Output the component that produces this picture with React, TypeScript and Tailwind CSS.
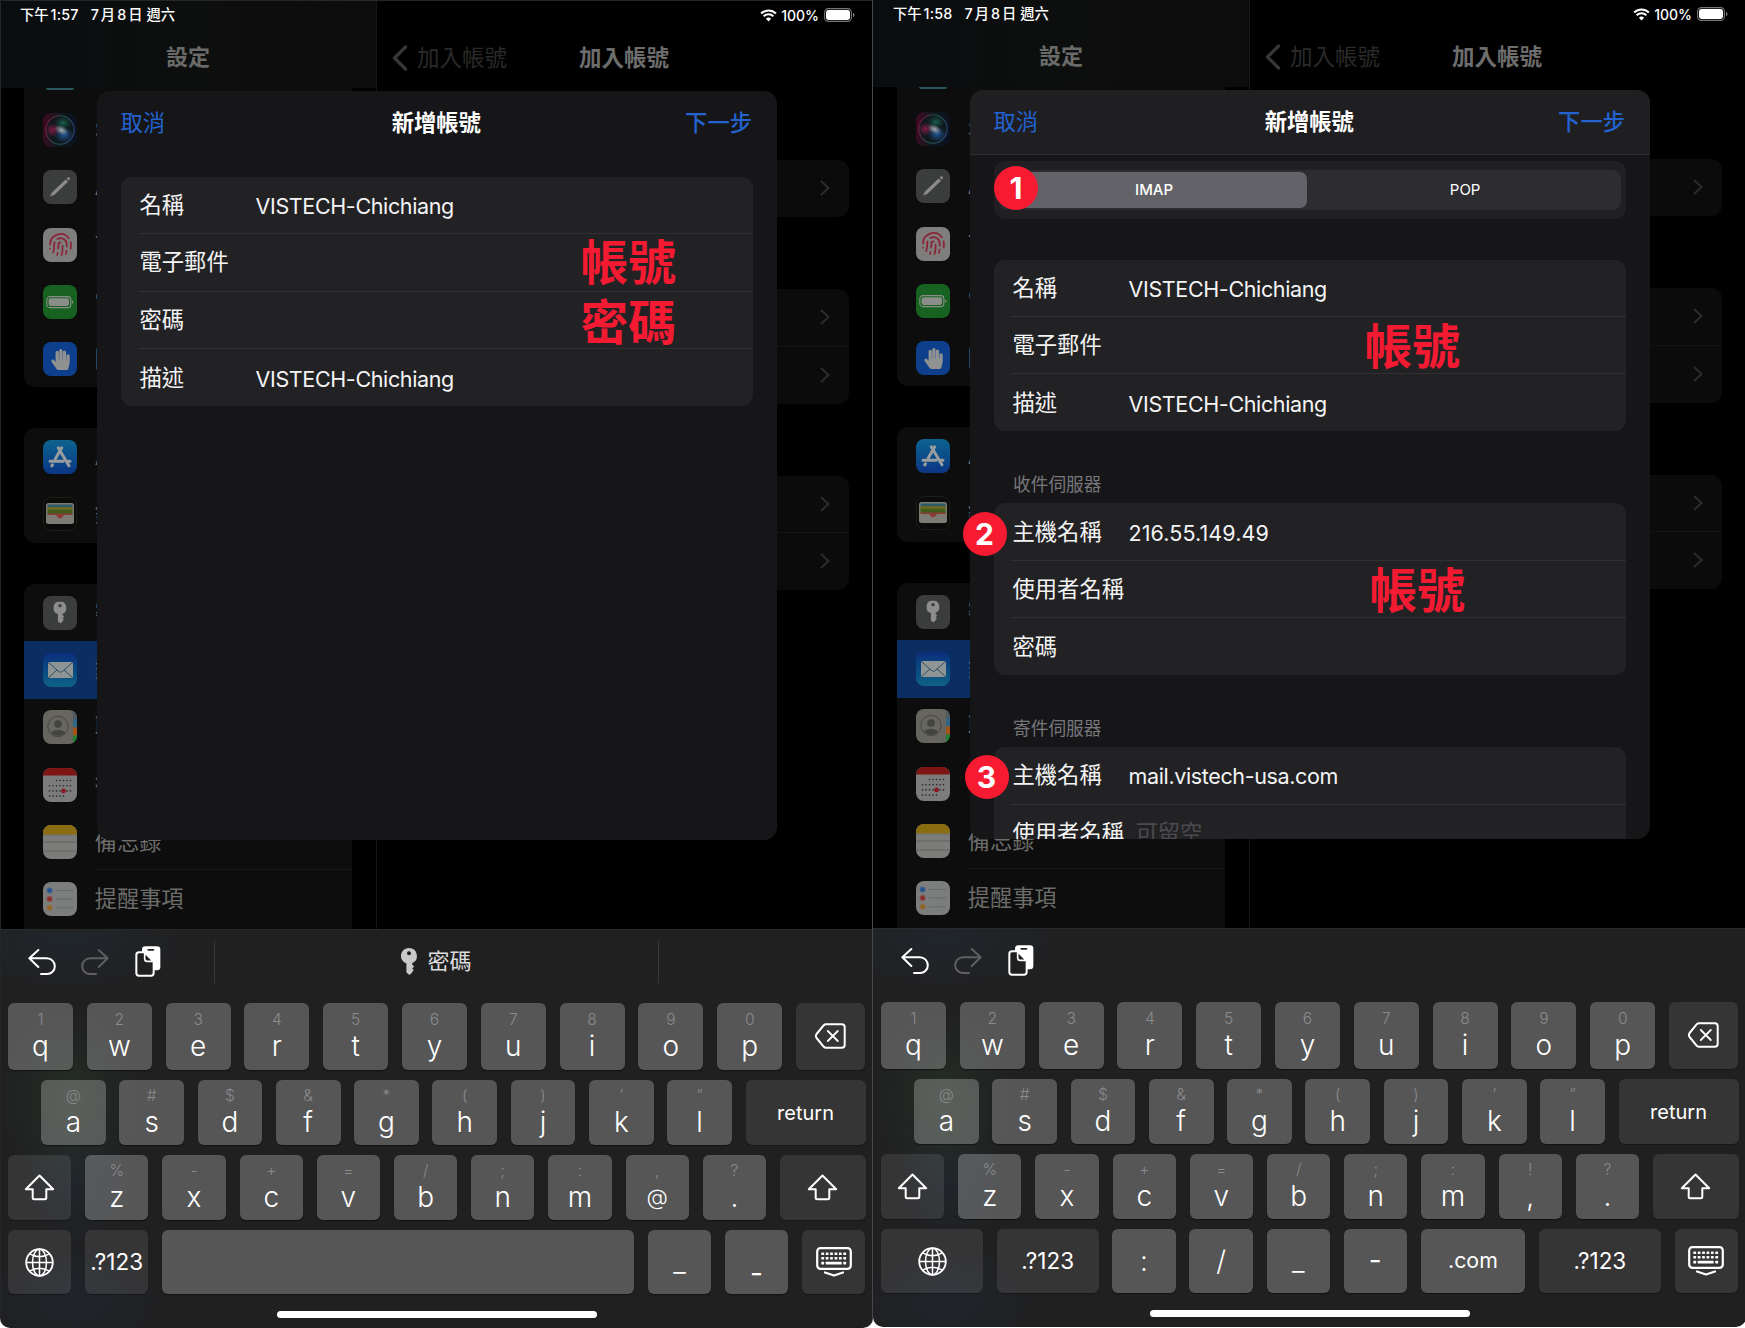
import React from "react";
import { Fingerprint } from "lucide-react";
import { FaHandPaper } from "react-icons/fa";

type Mode = "simple" | "server";

/* ---------- status bar ---------- */

function Wifi() {
  return (
    <svg width="17" height="13" viewBox="0 0 17 13" fill="none" stroke="#fff">
      <path d="M1.1 4.6a10.5 10.5 0 0 1 14.8 0" strokeWidth="2.1" />
      <path d="M3.6 7.3a7 7 0 0 1 9.8 0" strokeWidth="2" />
      <path d="M8.5 12.4 5.9 9.8a3.7 3.7 0 0 1 5.2 0z" fill="#fff" stroke="none" />
    </svg>
  );
}

function Battery() {
  return (
    <svg width="31" height="14" viewBox="0 0 31 14" fill="none">
      <rect x="0.6" y="0.6" width="26.8" height="12.8" rx="3.8" stroke="#77777a" strokeWidth="1.1" />
      <rect x="2" y="2" width="24" height="10" rx="2.4" fill="#fff" />
      <path d="M29 4.8q1.6 .8 1.6 2.2t-1.6 2.2z" fill="#77777a" />
    </svg>
  );
}

/* ---------- sidebar icons ---------- */

function SiriIcon({ id }: { id: string }) {
  return (
    <svg width="34" height="34" viewBox="0 0 34 34">
      <defs>
        <linearGradient id={id + "bg"} x1="0" y1="0.4" x2="1" y2="0.5">
          <stop offset="0" stopColor="#3b0a20" />
          <stop offset="0.45" stopColor="#12191c" />
          <stop offset="1" stopColor="#0a1020" />
        </linearGradient>
        <linearGradient id={id + "ring"} x1="0" y1="0.3" x2="1" y2="0.6">
          <stop offset="0" stopColor="#7a1740" />
          <stop offset="0.5" stopColor="#1f5648" />
          <stop offset="1" stopColor="#2a4476" />
        </linearGradient>
        <radialGradient id={id + "glow"}>
          <stop offset="0" stopColor="#a3adb2" />
          <stop offset="1" stopColor="#a3adb2" stopOpacity="0" />
        </radialGradient>
        <radialGradient id={id + "pink"}>
          <stop offset="0" stopColor="#7d1c45" />
          <stop offset="1" stopColor="#7d1c45" stopOpacity="0" />
        </radialGradient>
        <radialGradient id={id + "blue"}>
          <stop offset="0" stopColor="#1f5596" />
          <stop offset="1" stopColor="#1b4a86" stopOpacity="0" />
        </radialGradient>
        <radialGradient id={id + "green"}>
          <stop offset="0" stopColor="#17604a" />
          <stop offset="1" stopColor="#12493a" stopOpacity="0" />
        </radialGradient>
      </defs>
      <rect width="34" height="34" rx="8" fill={"url(#" + id + "bg)"} />
      <circle cx="17" cy="17" r="14.2" fill="#10181c" stroke={"url(#" + id + "ring)"} strokeWidth="1.1" />
      <ellipse cx="20" cy="10" rx="9" ry="7" fill={"url(#" + id + "green)"} />
      <ellipse cx="9.500" cy="17" rx="7.500" ry="7" fill={"url(#" + id + "pink)"} />
      <ellipse cx="21" cy="22" rx="10" ry="8" fill={"url(#" + id + "blue)"} />
      <ellipse cx="18.500" cy="17" rx="7.500" ry="4.500" fill={"url(#" + id + "glow)"} transform="rotate(25 18 17)" />
    </svg>
  );
}

function KeyGlyph({ fill, hole }: { fill: string; hole: string }) {
  return (
    <svg width="16" height="27" viewBox="0 0 16 27">
      <path
        d="M8 0a7.9 7.9 0 0 1 3.2 15.1v1.4l2 1.9-2 2 1.6 1.7-1.6 1.8v.6L8.4 27 5.4 24.6V15.4A7.9 7.9 0 0 1 8 0z"
        fill={fill}
      />
      <circle cx="8" cy="5.2" r="2" fill={hole} />
    </svg>
  );
}

function Tile({ className, children }: { className: string; children?: React.ReactNode }) {
  return (
    <div className={"flex h-[34px] w-[34px] shrink-0 items-center justify-center overflow-hidden rounded-[8px] " + className}>
      {children}
    </div>
  );
}

function PencilIcon() {
  return (
    <Tile className="bg-[#3b3d3c]">
      <svg width="34" height="34" viewBox="0 0 34 34">
        <path d="M7 26.6 9 22.4 22.6 9.4l2.4 2.4L11.2 25z" fill="#8b8c8a" />
        <path d="m23.6 8.4 1.5-1.1q1.6-.4 1.9 1.2L25.9 10.800z" fill="#8b8c8a" />
      </svg>
    </Tile>
  );
}

function BatteryTile() {
  return (
    <Tile className="bg-[#176221]">
      <svg width="28" height="14" viewBox="0 0 28 14">
        <rect x="0.8" y="1.6" width="24" height="11" rx="3.2" fill="none" stroke="#8b8d88" strokeWidth="1.1" />
        <rect x="2.6" y="3.3" width="20.4" height="7.6" rx="1.8" fill="#8b8d88" />
        <path d="M26 5.4q1.4.6 1.400 1.700t-1.400 1.700z" fill="#8b8d88" />
      </svg>
    </Tile>
  );
}

function AppStoreIcon() {
  return (
    <Tile className="bg-gradient-to-b from-[#0e638f] to-[#0d3585]">
      <svg width="34" height="34" viewBox="0 0 34 34" fill="none" stroke="#9a9d9e" strokeWidth="3" strokeLinecap="round">
        <path d="M18.700 7.800 12.300 19M15.200 7.800 26 25.800M7 21.300h13M25 21.300h2M9.500 24.800l-.7 1.100" />
      </svg>
    </Tile>
  );
}

function WalletIcon() {
  return (
    <Tile className="border border-[#1c1c1a] bg-[#0b0b0a]">
      <svg width="28" height="21" viewBox="0 0 28 21">
        <rect width="28" height="21" rx="2.500" fill="#7c7b74" />
        <rect x="1.500" y="1.500" width="25" height="4" fill="#2f5a68" />
        <rect x="1.500" y="4.200" width="25" height="3.500" fill="#6f6a1f" />
        <rect x="1.500" y="6.800" width="25" height="4.500" fill="#3f5c1c" />
        <path d="M1.500 10.500h25v1.500h-7.500q-1.500 0-2 1.200a3.300 3.300 0 0 1-6 0q-.5-1.200-2-1.200H1.500z" fill="#8b3a33" />
      </svg>
    </Tile>
  );
}

function MailIcon() {
  return (
    <Tile className="bg-gradient-to-b from-[#0c2f7c] to-[#0f6186]">
      <svg width="25" height="16" viewBox="0 0 25 16">
        <rect width="25" height="16" rx="1.800" fill="#8f9494" />
        <path d="M.8.800 10.800 9.600q1.700 1.300 3.400 0L24.200.800M.8 15.300 9 8M24.200 15.300 16 8" fill="none" stroke="#23475f" strokeWidth="0.900" />
      </svg>
    </Tile>
  );
}

function ContactsIcon() {
  return (
    <Tile className="bg-[#66655e]">
      <svg width="34" height="34" viewBox="0 0 34 34">
        <rect x="30" y="0" width="4" height="9" fill="#4e5a61" />
        <rect x="30" y="9" width="4" height="8.500" fill="#2f6683" />
        <rect x="30" y="17.500" width="4" height="8" fill="#a3521a" />
        <rect x="30" y="25.500" width="4" height="9" fill="#1e8030" />
        <circle cx="15" cy="16.500" r="10.200" fill="none" stroke="#43433f" strokeWidth="0.900" />
        <circle cx="15" cy="14" r="3.800" fill="#43433f" />
        <path d="M7.500 22.500q7.500-5.500 15 0-7 7-15 0z" fill="#43433f" />
      </svg>
    </Tile>
  );
}

function CalendarIcon() {
  const rows = [
    [13, 16.500, 20, 23.500, 27],
    [6, 9.500, 13, 16.500, 20, 23.500, 27],
    [6, 9.500, 13, 16.500, 20, 23.500, 27],
    [6, 9.500, 13, 16.500, 20],
  ];
  return (
    <Tile className="bg-[#7b7c7b]">
      <svg width="34" height="34" viewBox="0 0 34 34">
        <rect width="34" height="7.500" fill="#7e1512" />
        {rows.map((r, y) => r.map((x) => <circle key={y + "-" + x} cx={x + 0.500} cy={12.500 + y * 5.200} r="0.800" fill="#252525" />))}
        <circle cx="20.500" cy="22.900" r="2.300" fill="#8c1420" />
      </svg>
    </Tile>
  );
}

function NotesIcon() {
  return (
    <Tile className="bg-[#7c7d7b]">
      <svg width="34" height="34" viewBox="0 0 34 34">
        <rect width="34" height="9.500" fill="#8a6d10" />
        <path d="M0 10.300h34" stroke="#555" strokeWidth="0.800" strokeDasharray="0.800 1.200" />
        <path d="M0 17h34M0 26h34" stroke="#5a5b5a" strokeWidth="0.800" />
      </svg>
    </Tile>
  );
}

function RemindersIcon() {
  const dots: [number, string][] = [
    [8.500, "#1d4f94"],
    [17, "#8f2722"],
    [25.800, "#96631c"],
  ];
  return (
    <Tile className="bg-[#7c7d7d]">
      <svg width="34" height="34" viewBox="0 0 34 34">
        {dots.map(([y, c]) => (
          <g key={y}>
            <circle cx="6.600" cy={y} r="3" fill={c} fillOpacity="0.600" />
            <circle cx="6.600" cy={y} r="1.700" fill={c} />
            <path d={"M13 " + y + "h17"} stroke="#626362" strokeWidth="0.800" />
          </g>
        ))}
      </svg>
    </Tile>
  );
}

/* ---------- backdrop: settings sidebar and detail ---------- */

function SideRow({ icon, label, active }: { icon: React.ReactNode; label: string; active?: boolean }) {
  return (
    <div className={"flex h-[57.300px] items-center pl-[19px] " + (active ? "bg-[#0b2d62]" : "")}>
      {icon}
      <span className="ml-[17.800px] whitespace-nowrap text-[22.200px] leading-[30px] text-[#6c6c6b]">{label}</span>
    </div>
  );
}

function Sidebar({ id }: { id: string }) {
  return (
    <aside className="flex w-[377px] shrink-0 flex-col border-r border-[#151615]">
      <div className="h-[88px] shrink-0 bg-gradient-to-r from-[#0a0d0f] via-[#0d0f0e] to-[#0b0c0b] pt-[41px] text-center text-[22px] leading-8 font-bold text-[#6a6b69]">
        設定
      </div>
      <div className="ml-6 flex w-[328px] flex-col">
        <div className="h-[299px] rounded-b-[11px] bg-[#0c0d0c]">
          <div className="ml-[22px] h-[13.300px]">
            <div className="h-[2px] w-[28px] rounded-b-full bg-[#2a5561]" />
          </div>
          <SideRow icon={<SiriIcon id={id} />} label="Siri與搜尋" />
          <SideRow icon={<PencilIcon />} label="Apple Pencil" />
          <SideRow
            icon={
              <Tile className="bg-[#7e7e7d]">
                <Fingerprint size={25} strokeWidth={1.700} color="#8c2437" />
              </Tile>
            }
            label="Touch ID與密碼"
          />
          <SideRow icon={<BatteryTile />} label="電池" />
          <SideRow
            icon={
              <Tile className="bg-[#0d3f8c]">
                <FaHandPaper size={21} color="#8f9290" />
              </Tile>
            }
            label="隱私權"
          />
        </div>
        <div className="mt-[41px] h-[115px] rounded-[11px] bg-[#0c0d0c]">
          <SideRow icon={<AppStoreIcon />} label="App Store" />
          <SideRow icon={<WalletIcon />} label="錢包" />
        </div>
        <div className="mt-[41px] h-[345px] overflow-hidden rounded-t-[11px] bg-[#0c0d0c]">
          <SideRow
            icon={
              <Tile className="bg-[#3b3d3d]">
                <span className="scale-[0.820]">
                  <KeyGlyph fill="#8c8d8c" hole="#3b3d3d" />
                </span>
              </Tile>
            }
            label="密碼"
          />
          <SideRow icon={<MailIcon />} label="郵件" active />
          <SideRow icon={<ContactsIcon />} label="聯絡人" />
          <SideRow icon={<CalendarIcon />} label="行事曆" />
          <SideRow icon={<NotesIcon />} label="備忘錄" />
          <div className="-mt-px ml-[71px] h-0 border-t border-[#171817]" />
          <SideRow icon={<RemindersIcon />} label="提醒事項" />
        </div>
      </div>
    </aside>
  );
}

function DetailRow() {
  return (
    <div className="flex h-[57.300px] items-center justify-end pr-[19px]">
      <svg className="-mt-px" width="10" height="16" viewBox="0 0 10 16" fill="none" stroke="#2b2c2b" strokeWidth="2">
        <path d="m1 1 7.500 7L1 15" />
      </svg>
    </div>
  );
}

function Detail() {
  return (
    <div className="flex flex-1 flex-col bg-black pr-[24px]">
      <div className="flex h-[88px] items-center pl-[15px]">
        <svg className="mt-[28px]" width="16" height="26" viewBox="0 0 16 26" fill="none" stroke="#363736" strokeWidth="3.200" strokeLinecap="round" strokeLinejoin="round">
          <path d="M13.500 2 2.500 13l11 11" />
        </svg>
        <span className="mt-[27px] ml-[9px] text-[22.500px] leading-8 text-[#292a29]">加入帳號</span>
        <span className="mt-[27px] ml-[72px] text-[22.500px] leading-8 font-bold text-[#6c6d6c]">加入帳號</span>
      </div>
      <div className="mt-[72px] ml-5 rounded-[11px] bg-[#0a0b0a]">
        <DetailRow />
      </div>
      <div className="mt-[72px] ml-5 divide-y divide-[#131413] rounded-[11px] bg-[#0a0b0a]">
        <DetailRow />
        <DetailRow />
      </div>
      <div className="mt-[72px] ml-5 divide-y divide-[#131413] rounded-[11px] bg-[#0a0b0a]">
        <DetailRow />
        <DetailRow />
      </div>
    </div>
  );
}

/* ---------- account form ---------- */

type FieldProps = {
  label: string;
  value?: string;
  placeholder?: string;
  mark?: string;
  markPad?: string;
  tracking?: string;
  last?: boolean;
};

function Field({ label, value, placeholder, mark, markPad = "", tracking = "tracking-[-0.360px]", last }: FieldProps) {
  return (
    <div className="ml-[17.500px] h-[57.300px]">
      <div className={"flex h-full items-center border-[#303032] " + (last ? "" : "border-b")}>
        <span className={"pl-[1.500px] text-[22.300px] leading-8 whitespace-nowrap text-[#f4f4f5] " + (placeholder ? "" : "w-[117.500px] shrink-0")}>
          {label}
        </span>
        {value && <span className={"pt-[2px] text-[21.500px] leading-8 text-[#f4f4f5] " + tracking}>{value}</span>}
        {placeholder && <span className="ml-[11.500px] text-[22.300px] leading-8 text-[#4b4b4e]">{placeholder}</span>}
        {mark && <span className={"ml-auto text-[47.700px] leading-none font-bold text-[#f31a32] " + markPad}>{mark}</span>}
      </div>
    </div>
  );
}

function Group({ children }: { children: React.ReactNode }) {
  return <div className="rounded-[11px] bg-[#222224]">{children}</div>;
}

function SectionTitle({ children }: { children: React.ReactNode }) {
  return <div className="flex h-[72px] items-end pb-[4.500px] pl-[19.500px] text-[17.700px] leading-7 text-[#77777c]">{children}</div>;
}

function Badge({ n, className }: { n: number; className: string }) {
  return (
    <span className={"absolute flex h-11 w-11 items-center justify-center rounded-full bg-[#f71b32] text-[30px] font-bold text-white " + className}>
      {n}
    </span>
  );
}

function Modal({ mode }: { mode: Mode }) {
  const server = mode === "server";
  return (
    <div className="absolute top-[90.500px] left-[97px] flex h-[749.500px] w-[679.500px] flex-col overflow-hidden rounded-[13px] bg-[#161618]">
      <div
        className={
          "grid h-[65.500px] shrink-0 grid-cols-3 items-center px-[23.500px] text-[22.300px] leading-8 " +
          (server ? "border-b border-[#2f2f32] bg-[#1f1f21]" : "")
        }
      >
        <span className="text-[#2362cf]">取消</span>
        <span className="-ml-px text-center font-bold text-white">新增帳號</span>
        <span className="pr-px text-right font-medium text-[#2362cf]">下一步</span>
      </div>
      {server ? (
        <div className="flex flex-col px-[23.500px] pt-[6px]">
          <div className="h-[57.500px] rounded-[11px] bg-[#202022] px-[5.500px] py-[8.500px]">
            <div className="grid h-full grid-cols-2 rounded-[9px] bg-[#2d2c31] text-[15px] text-white">
              <div className="my-[2.500px] mr-[3px] ml-[2.500px] flex items-center justify-center rounded-[7px] bg-[#636268] pt-px font-medium">IMAP</div>
              <div className="flex items-center justify-center pt-px">POP</div>
            </div>
          </div>
          <div className="mt-[41px]">
            <Group>
              <Field label="名稱" value="VISTECH-Chichiang" />
              <Field label="電子郵件" mark="帳號" markPad="pr-[166px] pt-[6px]" />
              <Field label="描述" value="VISTECH-Chichiang" last />
            </Group>
          </div>
          <SectionTitle>收件伺服器</SectionTitle>
          <Group>
            <Field label="主機名稱" value="216.55.149.49" tracking="tracking-[0.100px]" />
            <Field label="使用者名稱" mark="帳號" markPad="pr-[161px] pt-[7px]" />
            <Field label="密碼" last />
          </Group>
          <SectionTitle>寄件伺服器</SectionTitle>
          <Group>
            <Field label="主機名稱" value="mail.vistech-usa.com" />
            <Field label="使用者名稱" placeholder="可留空" />
          </Group>
        </div>
      ) : (
        <div className="px-[23.500px] pt-[21px]">
          <Group>
            <Field label="名稱" value="VISTECH-Chichiang" />
            <Field label="電子郵件" mark="帳號" markPad="pr-[77px] pt-[3px]" />
            <Field label="密碼" mark="密碼" markPad="pr-[77px] pt-[8px]" />
            <Field label="描述" value="VISTECH-Chichiang" last />
          </Group>
        </div>
      )}
    </div>
  );
}

/* ---------- keyboard ---------- */

function Undo({ className }: { className: string }) {
  return (
    <svg className={className} width="28" height="28" viewBox="0 0 84 84" fill="none" stroke="currentColor" strokeWidth="6" strokeLinecap="round" strokeLinejoin="round">
      <path d="M31 6 4 31l27 26M4 31h53a23.500 23.500 0 0 1 0 47H39" />
    </svg>
  );
}

function Clipboard() {
  return (
    <svg width="26" height="31" viewBox="0 0 78 93">
      <rect x="21" y="1" width="55" height="72" rx="10" fill="#fff" />
      <rect x="37" y="9" width="21" height="5" rx="2.500" fill="#222" />
      <path d="M4 27q0-8 8-8h19l25 25v37q0 8-8 8H12q-8 0-8-8z" fill="#202021" stroke="#fff" strokeWidth="6" />
      <path d="M29 20v18q0 8 8 8h18z" fill="#202021" stroke="#fff" strokeWidth="5" strokeLinejoin="round" />
    </svg>
  );
}

function Shift() {
  return (
    <svg width="31" height="27" viewBox="0 0 31 27" fill="none" stroke="#fff" strokeWidth="2" strokeLinejoin="round">
      <path d="M15.500 1.500 1.800 15.300h6.900v8.500q0 1.500 1.500 1.500h10.600q1.500 0 1.500-1.500v-8.500h6.900z" />
    </svg>
  );
}

function Globe() {
  return (
    <svg width="29" height="29" viewBox="0 0 29 29" fill="none" stroke="#fff" strokeWidth="1.500">
      <circle cx="14.500" cy="14.500" r="13.300" strokeWidth="1.800" />
      <ellipse cx="14.500" cy="14.500" rx="7" ry="13.300" />
      <path d="M14.500 1.200v26.600M1.200 14.500h26.600M4.600 5.900q9.900 5.600 19.800 0M4.600 23.100q9.900-5.600 19.800 0" />
    </svg>
  );
}

function Backspace() {
  return (
    <svg width="31" height="26" viewBox="0 0 31 26" fill="none" stroke="#fff" strokeWidth="2" strokeLinejoin="round" strokeLinecap="round">
      <path d="M11 1.300h15.800q2.900 0 2.900 2.900v17.600q0 2.900-2.900 2.900H11q-1.300 0-2.200-.9L1.600 15q-1.500-2 0-4L8.800 2.200q.9-.9 2.200-.9z" />
      <path d="m12.800 8 10 10M22.800 8l-10 10" strokeWidth="1.800" />
    </svg>
  );
}

function HideKeyboard() {
  const cols = [5.300, 9.700, 14.100, 18.500, 22.900, 27.300];
  return (
    <svg width="36" height="30" viewBox="0 0 36 30" fill="none" stroke="#fff">
      <rect x="1.200" y="1.200" width="33.600" height="20.600" rx="3.200" strokeWidth="2.200" />
      <g fill="#fff" stroke="none">
        {cols.map((x) => (
          <React.Fragment key={x}>
            <rect x={x} y="5.500" width="2.800" height="2.600" rx="0.500" />
            <rect x={x} y="10" width="2.800" height="2.600" rx="0.500" />
          </React.Fragment>
        ))}
        <rect x="5.300" y="14.800" width="2.800" height="2.600" rx="0.500" />
        <rect x="9.700" y="14.800" width="16" height="2.600" rx="0.500" />
        <rect x="27.300" y="14.800" width="2.800" height="2.600" rx="0.500" />
      </g>
      <path d="m9 25.500 9 3 9-3" strokeWidth="2.200" strokeLinecap="round" strokeLinejoin="round" />
    </svg>
  );
}

const lightKey = "shrink-0 rounded-[6px] bg-white/[0.245] shadow-[0_1px_1px_rgba(0,0,0,0.45)] ";
const darkKey = "flex shrink-0 items-center justify-center rounded-[6px] bg-white/[0.095] text-white shadow-[0_1px_1px_rgba(0,0,0,0.3)] ";

function Key({ top, main, className }: { top: string; main: string; className: string }) {
  return (
    <div className={lightKey + "flex flex-col items-center " + className}>
      <span className="h-5 text-[15.500px] leading-5 font-light text-[#8b8b8d]">{top}</span>
      <span className={"h-8 leading-8 font-light text-white " + (main === "@" ? "text-[22px]" : "text-[28px]")}>{main}</span>
    </div>
  );
}

function Keyboard({ mode }: { mode: Mode }) {
  const server = mode === "server";
  const row1: [string, string][] = [["1", "q"], ["2", "w"], ["3", "e"], ["4", "r"], ["5", "t"], ["6", "y"], ["7", "u"], ["8", "i"], ["9", "o"], ["0", "p"]];
  const row2: [string, string][] = [["@", "a"], ["#", "s"], ["$", "d"], ["&", "f"], ["*", "g"], ["(", "h"], [")", "j"], ["’", "k"], ["”", "l"]];
  const row3: [string, string][] = [["%", "z"], ["-", "x"], ["+", "c"], ["=", "v"], ["/", "b"], [";", "n"], [":", "m"], server ? ["!", ","] : [",", "@"], ["?", "."]];
  return (
    <div className="flex h-[399px] flex-col rounded-b-[10px] border-t border-[#29292a] bg-[#202021] bg-[radial-gradient(ellipse_70px_90px_at_70px_170px,rgba(50,80,50,0.28),transparent),radial-gradient(ellipse_90px_60px_at_75px_370px,rgba(30,60,90,0.16),transparent),radial-gradient(ellipse_60px_70px_at_75px_250px,rgba(35,65,90,0.16),transparent),radial-gradient(ellipse_120px_50px_at_70px_10px,rgba(35,60,80,0.22),transparent)]">
      <div className="flex h-[72.500px] shrink-0 items-start">
        <Undo className="mt-[17.500px] ml-[28px] text-white" />
        <Undo className="mt-[17.500px] ml-[25px] -scale-x-100 text-[#5f5f61]" />
        <div className="mt-[16px] ml-[25.500px]">
          <Clipboard />
        </div>
        {!server && (
          <div className="mt-[10.500px] ml-[53.500px] flex h-[42px] w-[445px] items-center justify-center border-x border-[#38383a] text-[22px] text-[#dcdcde]">
            <span className="mr-[10px]">
              <KeyGlyph fill="#c9c9cb" hole="#202021" />
            </span>
            密碼
          </div>
        )}
      </div>
      <div className="flex flex-col gap-[10.300px] pl-[8px]">
        <div className="flex h-[67.500px] gap-[13.800px]">
          {row1.map(([t, m]) => (
            <Key key={m} top={t} main={m} className="w-[65px] pt-[7.500px]" />
          ))}
          <div className={darkKey + "w-[69.500px]"}>
            <Backspace />
          </div>
        </div>
        <div className="flex h-[64.500px] gap-[13.600px] pl-[33px]">
          {row2.map(([t, m]) => (
            <Key key={m} top={t} main={m} className="w-[64.700px] pt-[5.500px]" />
          ))}
          <div className={darkKey + "w-[120px] text-[20px]"}>return</div>
        </div>
        <div className="flex h-[64.500px] gap-[13.900px]">
          <div className={darkKey + "w-[63.300px]"}>
            <Shift />
          </div>
          {row3.map(([t, m]) => (
            <Key key={m} top={t} main={m} className="w-[63.300px] pt-[5.500px]" />
          ))}
          <div className={darkKey + "w-[86px]"}>
            <Shift />
          </div>
        </div>
        {server ? (
          <div className="flex h-[64.500px] gap-[13.700px] text-white">
            <div className={darkKey + "w-[102px]"}>
              <Globe />
            </div>
            <div className={darkKey + "w-[102px] text-[22.500px]"}>.?123</div>
            <div className={lightKey + "flex w-[63.400px] items-center justify-center text-[28px] font-light"}>:</div>
            <div className={lightKey + "flex w-[63.400px] items-center justify-center text-[28px] font-light"}>/</div>
            <div className={lightKey + "flex w-[63.400px] items-center justify-center text-[28px] font-light"}>_</div>
            <div className={lightKey + "flex w-[63.400px] items-center justify-center pb-[2px] text-[28px]"}>-</div>
            <div className={lightKey + "flex w-[104.500px] items-center justify-center text-[21.300px]"}>.com</div>
            <div className={darkKey + "w-[122px] text-[22.500px]"}>.?123</div>
            <div className={darkKey + "w-[63.300px]"}>
              <HideKeyboard />
            </div>
          </div>
        ) : (
          <div className="flex h-[64.500px] gap-[13.800px] text-white">
            <div className={darkKey + "w-[63.300px]"}>
              <Globe />
            </div>
            <div className={darkKey + "w-[63.300px] text-[22.500px]"}>.?123</div>
            <div className={lightKey + "w-[471.800px]"} />
            <div className={lightKey + "flex w-[63.300px] items-center justify-center text-[28px] font-light"}>_</div>
            <div className={lightKey + "flex w-[63.300px] items-end justify-center text-[28px]"}>-</div>
            <div className={darkKey + "w-[63.300px]"}>
              <HideKeyboard />
            </div>
          </div>
        )}
      </div>
      <div className="mt-[16.500px] ml-[277px] h-[7.500px] w-[320px] rounded-full bg-white" />
    </div>
  );
}

function Screen({ mode, time }: { mode: Mode; time: string }) {
  const server = mode === "server";
  return (
    <section className="relative flex h-[1328px] w-[873px] shrink-0 flex-col rounded-b-[10px]">
      <div className="relative flex h-[929px] overflow-hidden bg-black">
        <Sidebar id={mode} />
        <Detail />
        <div className="absolute inset-x-0 top-0 flex h-[30px] items-center pr-[18px] pl-[20px] text-[14.300px] font-medium text-white">
          <span>下午</span>
          <span className="ml-[2px] tracking-[0.200px]">{time}</span>
          <span className="ml-[12px]">7</span>
          <span className="ml-[2px]">月</span>
          <span className="ml-[2px]">8</span>
          <span className="ml-[2px]">日</span>
          <span className="ml-[4px]">週六</span>
          <span className="ml-auto">
            <Wifi />
          </span>
          <span className="mr-[5px] ml-[4px] text-[14px]">100%</span>
          <Battery />
        </div>
        <Modal mode={mode} />
        {server && (
          <>
            <Badge n={1} className="top-[167px] left-[121px]" />
            <Badge n={2} className="top-[513px] left-[89.500px]" />
            <Badge n={3} className="top-[756px] left-[91.500px]" />
          </>
        )}
      </div>
      <Keyboard mode={mode} />
    </section>
  );
}

export default function App() {
  return (
    <main
      lang="zh-TW"
      className="relative flex h-[1328px] w-[1745px] overflow-hidden bg-white [font-family:Inter,'Noto_Sans_CJK_TC',sans-serif]"
    >
      <Screen mode="simple" time="1:57" />
      <div className="-mt-px shrink-0">
        <Screen mode="server" time="1:58" />
      </div>
      <div className="pointer-events-none absolute top-0 left-0 h-[1318px] w-[873px] border-t border-r border-l border-t-[#252627] border-r-[#48484a] border-l-[#242526]" />
    </main>
  );
}
